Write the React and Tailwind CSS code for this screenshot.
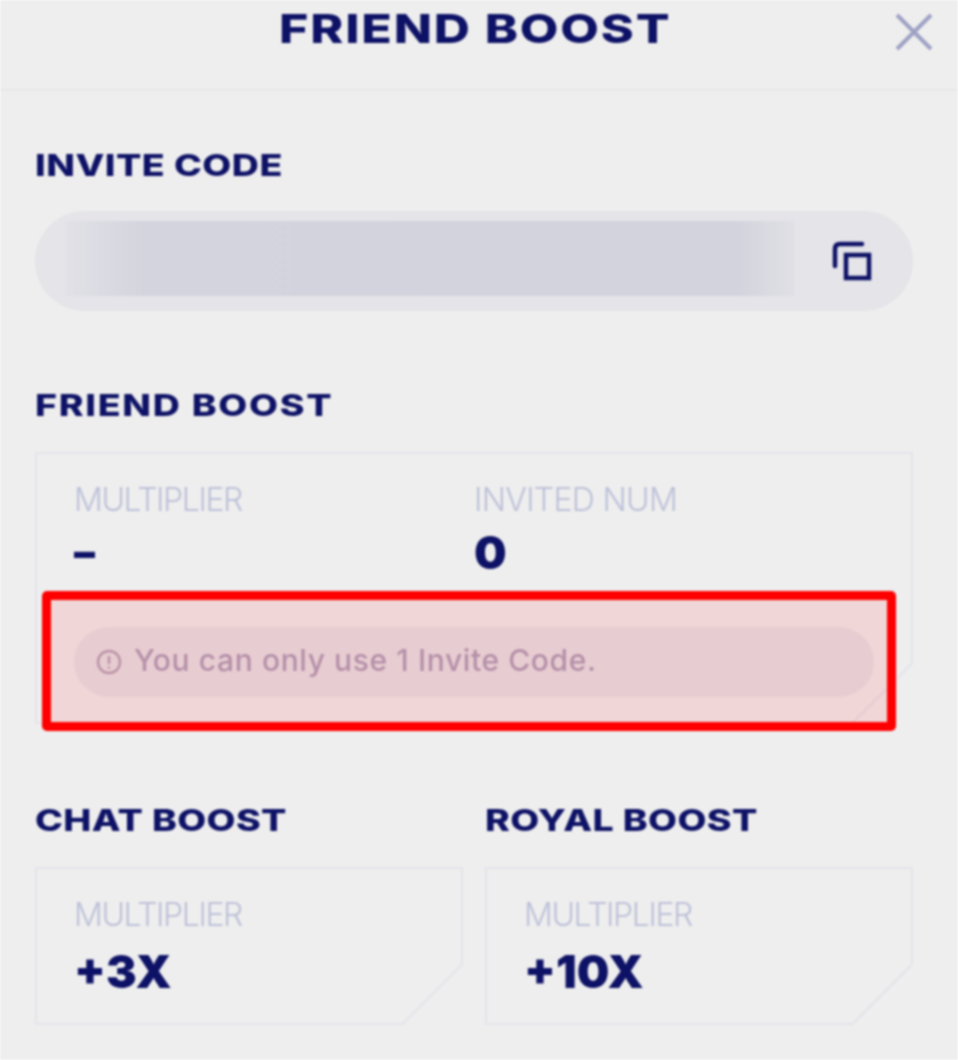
import React from "react";

const cutCard =
  "bg-[#e4e4eb] p-[2px] [clip-path:polygon(0_0,100%_0,100%_calc(100%-60px),calc(100%-60px)_100%,0_100%)]";
const cutInner =
  "h-full bg-[#eeeeee] [clip-path:polygon(0_0,100%_0,100%_calc(100%-59px),calc(100%-59px)_100%,0_100%)]";
const heading =
  "origin-left scale-x-[1.25] font-['Inter',sans-serif] font-extrabold text-[#0e1266] text-[30px] leading-[36px]";
const statLabel =
  "font-['Inter',sans-serif] font-light text-[#bcc0d8] text-[32px] leading-[36px]";
const statValue =
  "font-['Inter',sans-serif] font-black text-[#0e1266] leading-[50px]";

function CopyIcon() {
  return (
    <svg width="40" height="40" viewBox="0 0 40 40" fill="none" stroke="#0e1266" strokeWidth="4.5">
      <path d="M3 25V8q0-5 5-5h22" strokeLinecap="round" />
      <rect x="14" y="14" width="23" height="23" />
    </svg>
  );
}

function CloseIcon() {
  return (
    <svg width="38" height="38" viewBox="0 0 38 38" fill="none" stroke="#9ea1c4" strokeWidth="4">
      <path d="M2 2l34 34M36 2L2 36" />
    </svg>
  );
}

function InfoIcon() {
  return (
    <svg width="26" height="26" viewBox="0 0 26 26" fill="none" stroke="#b3a4ba" strokeWidth="2.5">
      <circle cx="13" cy="13" r="11" />
      <path d="M13 7v8M13 17.5v2" />
    </svg>
  );
}

function BoostCard({ title, value }) {
  return (
    <div>
      <h3 className={`tracking-[0.3px] ${heading}`}>{title}</h3>
      <div className={`mt-[29px] h-[158px] ${cutCard}`}>
        <div className={`${cutInner} pl-[37px] pt-[28px]`}>
          <p className={`tracking-[-1.4px] ${statLabel}`}>MULTIPLIER</p>
          <p className={`mt-[13px] text-[46px] ${statValue}`}>{value}</p>
        </div>
      </div>
    </div>
  );
}

export default function App() {
  return (
    <div className="h-[1060px] w-[958px] overflow-hidden bg-[#eeeeee] blur-[0.8px]">
      <header className="relative h-[91px] border-b-2 border-[#e8e8ec]">
        <h1 className="pr-[6px] pt-[5px] text-center font-['Inter',sans-serif] text-[40px] font-extrabold leading-[48px] tracking-[1.5px] text-[#0e1266] scale-x-[1.25]">
          FRIEND BOOST
        </h1>
        <button className="absolute right-[25px] top-[13px]">
          <CloseIcon />
        </button>
      </header>

      <main className="pl-[35px] pr-[45px]">
        <h2 className={`mt-[56px] tracking-[0.4px] ${heading}`}>INVITE CODE</h2>
        <div className="mt-[28px] flex h-[100px] items-center rounded-full bg-[#e4e4e9] pl-[30px] pr-[41px]">
          <div className="mb-[5px] h-[75px] w-[730px] bg-[linear-gradient(90deg,#e1e1e7_0%,#dbdbe3_5%,#d4d4de_11%,#d3d3dd_92%,#e0e0e6_100%)]" />
          <span className="ml-auto">
            <CopyIcon />
          </span>
        </div>

        <h2 className={`mt-[76px] tracking-[1.4px] ${heading}`}>FRIEND BOOST</h2>
        <div className="relative mt-[29px]">
          <div className={`h-[272px] ${cutCard}`}>
            <div className={`${cutInner} px-[37px] pt-[28px]`}>
              <div className="grid grid-cols-2">
                <div>
                  <p className={`tracking-[-1.4px] ${statLabel}`}>MULTIPLIER</p>
                  <p className={`mt-[9px] text-[42px] ${statValue}`}>–</p>
                </div>
                <div>
                  <p className={`tracking-[-0.7px] ${statLabel}`}>INVITED NUM</p>
                  <p className={`mt-[9px] text-[46px] ${statValue}`}>0</p>
                </div>
              </div>
              <div className="mt-[50px] flex h-[70px] items-center gap-[12px] rounded-full bg-[#e4e4e9] pl-[22px]">
                <InfoIcon />
                <span className="pb-[3px] font-['Inter',sans-serif] text-[30px] font-medium tracking-[0.6px] text-[#ad9fbc]">
                  You can only use 1 Invite Code.
                </span>
              </div>
            </div>
          </div>
          <div className="absolute left-[7px] top-[139px] h-[140px] w-[854px] rounded-[5px] border-[9px] border-[#ff0000] bg-[#ff0000]/10" />
        </div>

        <div className="mt-[78px] grid grid-cols-2 gap-[22px]">
          <BoostCard title="CHAT BOOST" value="+3X" />
          <BoostCard title="ROYAL BOOST" value="+10X" />
        </div>
      </main>
    </div>
  );
}
